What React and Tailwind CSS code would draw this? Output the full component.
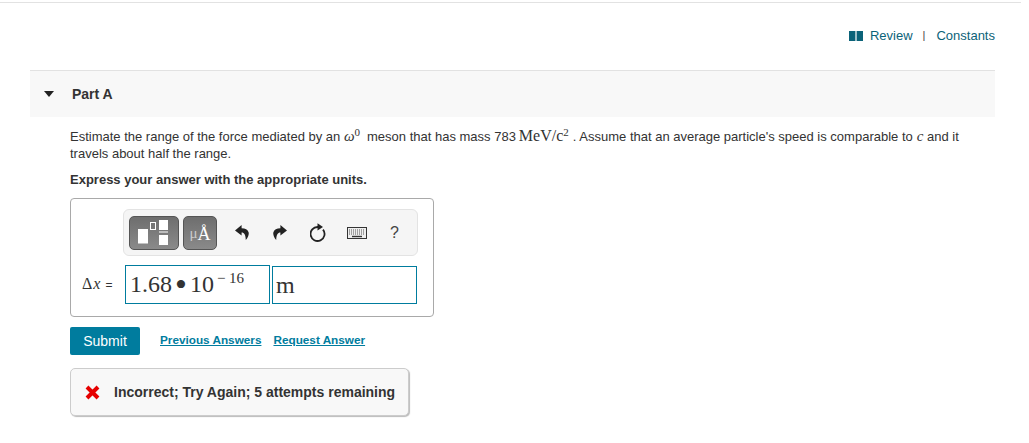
import React from 'react'

const sans = { fontFamily: '"Liberation Sans", Arial, sans-serif' }
const serif = { fontFamily: '"Liberation Serif", serif' }

const UndoIcon = ({ flip }) => (
  <svg width="14" height="15" viewBox="0 0 14 15" className={flip ? '-scale-x-100' : ''}>
    <path d="M6.6 0 L0 5.4 L6.6 10.6 L6.6 7.6 C9.2 7.6 10.6 9.6 10.8 15 C13 12.4 14.2 9.6 13.6 7.2 C12.9 4.6 10.2 3.4 6.6 3.3 Z" fill="#222" />
  </svg>
)

const ResetIcon = () => (
  <svg width="17" height="19" viewBox="0 0 17 19">
    <path d="M13 6.6 A7 7 0 1 1 8 4" fill="none" stroke="#222" strokeWidth="1.8" />
    <path d="M7.5 0.2 L13 4 L7.5 7.6 Z" fill="#222" />
  </svg>
)

const KeyboardIcon = () => (
  <svg width="20" height="12" viewBox="0 0 20 12">
    <rect x="0.5" y="0.5" width="19" height="11" fill="#eee" stroke="#333" />
    <path d="M2 3 H18 M2 5 H18 M2 7 H18" stroke="#555" strokeWidth="1" strokeDasharray="1 1" />
    <path d="M5 9.5 H15" stroke="#333" strokeWidth="1.4" />
  </svg>
)

const TemplateIcon = () => (
  <svg width="30" height="25" viewBox="0 0 30 25">
    <rect x="0" y="9" width="10" height="14.5" fill="#fff" />
    <rect x="12.5" y="2.5" width="5" height="7" fill="none" stroke="#fff" strokeWidth="1" />
    <rect x="21" y="0" width="9" height="10" fill="#fff" />
    <rect x="21" y="11.5" width="9" height="1" fill="#fff" />
    <rect x="21" y="15" width="9" height="10" fill="#fff" />
  </svg>
)

const App = () => {
  return (
    <div className="w-[1029px] h-[443px] bg-white overflow-hidden text-[13px] text-[#333]" style={sans}>
      <div className="pt-[2px]">
        <div className="w-[1021px] h-px bg-[#e2e2e2]" />
      </div>

      {/* Review links */}
      <div className="w-[995px] h-[67px] pt-[25px] flex justify-end items-start text-[#0b6379] leading-[15px]">
        <svg width="14" height="10" viewBox="0 0 14 10" className="mt-[3px] mr-[7px]">
          <path d="M0 0 H6.4 V10 H0 Z M7.6 0 H14 V10 H7.6 Z" fill="#0b6379" />
        </svg>
        <span>Review</span>
        <span className="ml-[10px] mr-[11px] text-[#444] text-[11px]">|</span>
        <span>Constants</span>
      </div>

      {/* Part A header */}
      <div className="ml-[30px] w-[965px] h-[47px] bg-[#f8f8f8] border-t border-[#e2e2e2] flex items-center">
        <svg width="10" height="6" viewBox="0 0 10 6" className="ml-[14px]">
          <path d="M0 0 H10 L5 6 Z" fill="#222" />
        </svg>
        <span className="ml-[18px] font-bold text-[14px] text-[#333]">Part A</span>
      </div>

      <div className="ml-[70px] w-[900px]">
        <p className="mt-[11px] leading-[17px]">
          Estimate the range of the force mediated by an{' '}
          <span className="italic text-[15px] leading-[10px]" style={serif}>ω</span>
          <sup className="text-[11px]" style={serif}>0</sup>
          <span className="ml-[7px]">meson that has mass 783</span>
          <span className="ml-[3px] text-[16px] leading-[10px]" style={serif}>MeV/c</span>
          <sup className="text-[11px]" style={serif}>2</sup>
          <span className="ml-[4px]">. Assume that an average particle's speed is comparable to</span>
          <span className="ml-[4px] italic text-[15px] leading-[10px]" style={serif}>c</span>
          {' '}and it travels about half the range.
        </p>
        <p className="mt-[9px] font-bold leading-[17px]">Express your answer with the appropriate units.</p>

        {/* Answer box */}
        <div className="mt-[10px] w-[364px] h-[119px] border border-[#a9a9a9] rounded-[4px] pt-[10px]">
          <div className="ml-[52px] w-[295px] h-[47px] bg-[#f5f5f5] border border-[#e3e3e3] rounded-[6px] flex items-center pl-[5px]">
            <div className="w-[50px] h-[34px] rounded-[5px] border border-[#555] bg-gradient-to-b from-[#6e6e6e] to-[#8a8a8a] flex items-center justify-center pr-[2px]">
              <TemplateIcon />
            </div>
            <div className="ml-[4px] w-[34px] h-[34px] rounded-[5px] border border-[#555] bg-gradient-to-b from-[#6e6e6e] to-[#8a8a8a] flex items-center justify-center text-white text-[18px] leading-none pt-[2px]" style={serif}>
              <span className="text-[#ccc] text-[15px]">μ</span>Å
            </div>
            <div className="ml-[18px] w-[14px] flex"><UndoIcon /></div>
            <div className="ml-[24px] w-[14px] flex"><UndoIcon flip /></div>
            <div className="ml-[23px] w-[18px] flex"><ResetIcon /></div>
            <div className="ml-[19px] w-[20px] flex"><KeyboardIcon /></div>
            <div className="ml-[23px] text-[16px] text-[#444]">?</div>
          </div>

          <div className="mt-[9px] flex items-start">
            <div className="w-[54px] pl-[11px] pt-[11px] text-[16px] text-[#333] whitespace-nowrap leading-[16px]" style={serif}>
              Δ<span className="italic ml-px">x</span><span className="ml-[5px] text-[12px]" style={sans}>=</span>
            </div>
            <div className="w-[145px] h-[39px] border border-[#007c9e] pl-[4px] text-[24px] text-[#333] leading-[36px] whitespace-nowrap" style={serif}>
              1.68
              <span className="text-[34px] leading-[10px] relative top-[4px] mx-[3px]">•</span>
              10
              <span className="text-[15px] relative -top-[9px] ml-[3px]">− 16</span>
            </div>
            <div className="ml-[2px] mt-px w-[145px] h-[38px] border border-[#007c9e] pl-[3px] text-[24px] text-[#333] leading-[36px]" style={serif}>
              m
            </div>
          </div>
        </div>

        {/* Actions */}
        <div className="mt-[10px] flex items-start">
          <button className="w-[70px] h-[28px] bg-[#007c9e] rounded-[2px] text-white text-[14px] leading-[28px] text-center">
            Submit
          </button>
          <a className="ml-5 mt-[5px] text-[11.75px] font-bold underline text-[#007c9e] leading-[15px]">Previous Answers</a>
          <a className="ml-3 mt-[5px] text-[11.75px] font-bold underline text-[#007c9e] leading-[15px]">Request Answer</a>
        </div>

        {/* Feedback */}
        <div className="mt-[13px] w-[339px] h-[48px] bg-[#f8f8f8] border border-[#ccc] rounded-[5px] shadow-[1px_1px_1px_#bbb] flex items-center pl-[14px] pt-px">
          <svg width="15" height="15" viewBox="0 0 15 15">
            <path d="M2 2 L13 13 M13 2 L2 13" stroke="#e60000" strokeWidth="4" />
          </svg>
          <span className="ml-[14px] font-bold text-[14px] text-[#333] whitespace-nowrap">Incorrect; Try Again; 5 attempts remaining</span>
        </div>
      </div>
    </div>
  )
}

export default App
